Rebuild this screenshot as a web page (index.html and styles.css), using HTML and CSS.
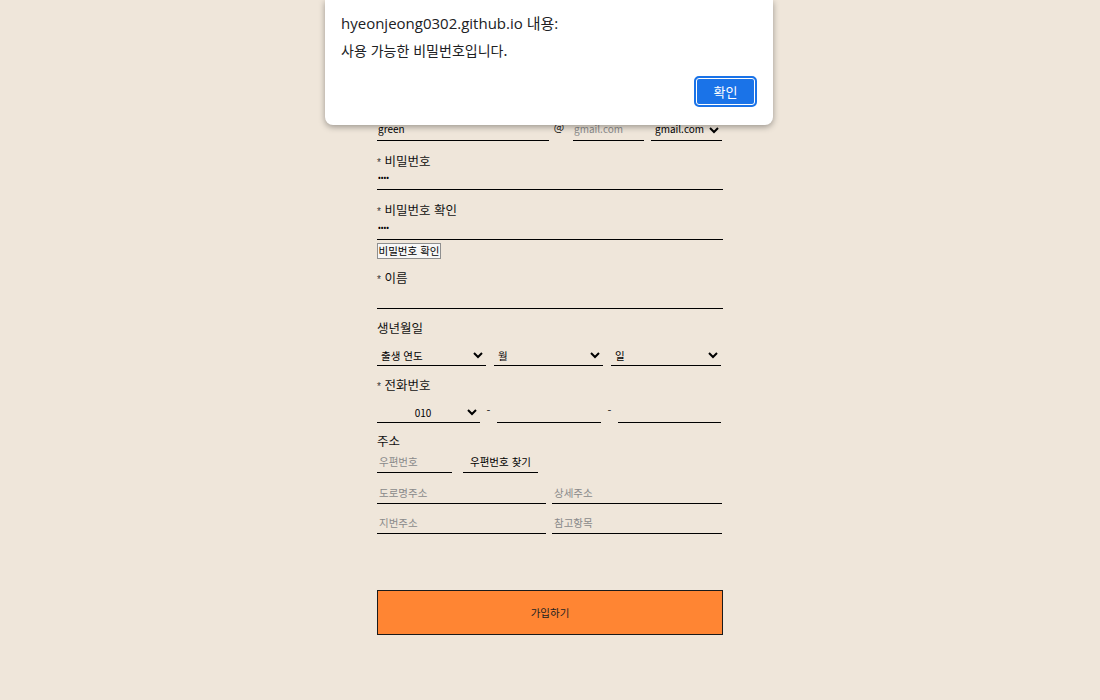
FILE: index.html
```html
<!DOCTYPE html>
<html lang="ko">
<head>
<meta charset="utf-8">
<title>회원가입</title>
<link rel="stylesheet" href="styles.css">
</head>
<body>
<form class="join">
  <div class="email-row">
    <input class="field email-id" type="text" value="green">
    <span class="at">@</span>
    <input class="field email-domain" type="text" placeholder="gmail.com">
    <select class="field email-select">
      <option>gmail.com</option>
      <option>naver.com</option>
    </select>
  </div>
  <div class="group">
    <div class="label"><span class="star">*</span> 비밀번호</div>
    <input class="field full h20 pw" type="password" value="1234">
  </div>
  <div class="group">
    <div class="label"><span class="star">*</span> 비밀번호 확인</div>
    <input class="field full h21 pw" type="password" value="1234">
  </div>
  <button class="check-btn" type="button">비밀번호 확인</button>
  <div class="group g10">
    <div class="label"><span class="star">*</span> 이름</div>
    <input class="field full h22" type="text">
  </div>
  <div class="group g10">
    <div class="label">생년월일</div>
    <div class="row3">
      <select class="field sel"><option>출생 연도</option></select>
      <select class="field sel"><option>월</option></select>
      <select class="field sel last"><option>일</option></select>
    </div>
  </div>
  <div class="group g10">
    <div class="label"><span class="star">*</span> 전화번호</div>
    <div class="phone-row">
      <select class="field tel-sel"><option>010</option></select>
      <span class="dash">-</span>
      <input class="field tel" type="text">
      <span class="dash">-</span>
      <input class="field tel" type="text">
    </div>
  </div>
  <div class="group g9">
    <div class="label">주소</div>
    <div class="addr-row first">
      <input class="field zip" type="text" placeholder="우편번호">
      <button class="zip-btn" type="button">우편번호 찾기</button>
    </div>
    <div class="addr-row r2">
      <input class="field half" type="text" placeholder="도로명주소">
      <input class="field half right" type="text" placeholder="상세주소">
    </div>
    <div class="addr-row r3">
      <input class="field half" type="text" placeholder="지번주소">
      <input class="field half right" type="text" placeholder="참고항목">
    </div>
  </div>
  <button class="submit" type="button">가입하기</button>
</form>

<div class="dialog">
  <div class="dialog-title">hyeonjeong0302.github.io 내용:</div>
  <div class="dialog-msg">사용 가능한 비밀번호입니다.</div>
  <div class="dialog-actions">
    <button class="dialog-ok" type="button">확인</button>
  </div>
</div>
</body>
</html>
```
FILE: styles.css
```css
html, body {
  margin: 0;
  padding: 0;
}
body {
  background: #efe6da;
  font-family: "Noto Sans CJK KR", "Noto Sans", sans-serif;
  color: #111;
  height: 700px;
  overflow: hidden;
}
.join {
  width: 346px;
  margin: 0 auto;
  padding-top: 119px;
  display: flex;
  flex-direction: column;
}
.group {
  margin-top: 11px;
  display: flex;
  flex-direction: column;
}
.group.g9 { margin-top: 9px; }
.group.g10 { margin-top: 10px; }
.label {
  height: 18px;
  line-height: 18px;
  font-size: 12.5px;
  color: #111;
}
.star {
  font-family: "Liberation Sans", sans-serif;
  font-size: 10px;
  color: #333;
}
.field {
  box-sizing: border-box;
  border: none;
  border-bottom: 1px solid #000;
  background: transparent;
  outline: none;
  font-family: "Noto Sans CJK KR", "Liberation Sans", sans-serif;
  font-size: 10px;
  color: #000;
  padding: 0 0 0 1px;
  margin: 0;
  border-radius: 0;
}
.field::placeholder {
  color: #8a8a8a;
}
.full { width: 346px; }
.h20 { height: 20px; }
.h21 { height: 21px; }
.h22 { height: 22px; }
.pw {
  font-size: 8px;
  letter-spacing: 0;
  padding-bottom: 6px;
}
.email-row {
  display: flex;
  align-items: flex-start;
  height: 22px;
}
.email-id { width: 172px; height: 22px; padding-bottom: 3px; }
.at {
  width: 24px;
  text-align: center;
  font-size: 11px;
  line-height: 14px;
  margin-left: -2px;
  margin-right: 2px;
}
.email-domain { width: 71px; height: 22px; padding-bottom: 3px; }
.email-select { width: 71px; height: 22px; margin-left: 7px; padding: 0 0 3px 0; }
.check-btn {
  align-self: flex-start;
  margin-top: 3px;
  height: 16px;
  width: 64px;
  padding: 0;
  font-family: "Noto Sans CJK KR", sans-serif;
  font-size: 10.5px;
  line-height: 14px;
  color: #000;
  background: #f7f7f7;
  border: 1px solid #8f8f8f;
  border-radius: 0;
}
.row3 {
  margin-top: 8px;
  display: flex;
  gap: 8px;
}
.sel {
  width: 109px;
  height: 21px;
  font-size: 10.5px;
  padding-left: 0;
}
.sel.last { width: 110px; }
.phone-row {
  margin-top: 8px;
  display: flex;
  align-items: flex-start;
}
.tel-sel {
  width: 103px;
  height: 21px;
  text-align: center;
  text-align-last: center;
  font-size: 10px;
}
.dash {
  width: 17px;
  text-align: center;
  font-size: 11px;
  line-height: 16px;
}
.tel { width: 104px; height: 21px; }
.tel:last-child { width: 103px; }
.addr-row {
  display: flex;
}
.addr-row.first { margin-top: 1px; }
.addr-row.r2 { margin-top: 9px; }
.addr-row.r3 { margin-top: 8px; }
.zip { width: 75px; height: 22px; padding-left: 2px; font-size: 10.5px; }
.zip-btn {
  margin-left: 11px;
  width: 75px;
  height: 22px;
  padding: 0;
  border: none;
  border-bottom: 1px solid #000;
  background: transparent;
  font-family: "Noto Sans CJK KR", sans-serif;
  font-size: 10.5px;
  color: #000;
  border-radius: 0;
}
.half { width: 169px; height: 22px; padding-left: 2px; font-size: 10.5px; }
.half.right { width: 170px; margin-left: 6px; }
.submit {
  margin-top: 56px;
  height: 45px;
  width: 346px;
  background: #ff8533;
  border: 1px solid #1a1a1a;
  border-radius: 0;
  font-family: "Noto Sans CJK KR", sans-serif;
  font-size: 10.5px;
  color: #222;
  padding: 0;
}

/* alert dialog overlay */
.dialog {
  position: absolute;
  top: 0;
  left: 325px;
  width: 448px;
  height: 125px;
  box-sizing: border-box;
  background: #fff;
  border-radius: 0 0 8px 8px;
  box-shadow: 0 2px 6px rgba(0, 0, 0, 0.35);
  padding: 12px 16px 0 16px;
  display: flex;
  flex-direction: column;
}
.dialog-title {
  font-family: "Open Sans", "Noto Sans CJK KR", sans-serif;
  font-size: 15px;
  line-height: 22px;
  color: #202124;
}
.dialog-msg {
  margin-top: 6px;
  font-family: "Noto Sans CJK KR", sans-serif;
  font-size: 14px;
  line-height: 20px;
  color: #202124;
}
.dialog-actions {
  display: flex;
  justify-content: flex-end;
  margin-top: 16px;
}
.dialog-ok {
  box-sizing: border-box;
  width: 63px;
  height: 31px;
  margin-right: 0;
  background: #1a73e8;
  color: #fff;
  border: 2px solid #1a73e8;
  box-shadow: inset 0 0 0 1px #fff;
  border-radius: 5px;
  font-family: "Noto Sans CJK KR", sans-serif;
  font-size: 13px;
  padding: 0;
}
```
